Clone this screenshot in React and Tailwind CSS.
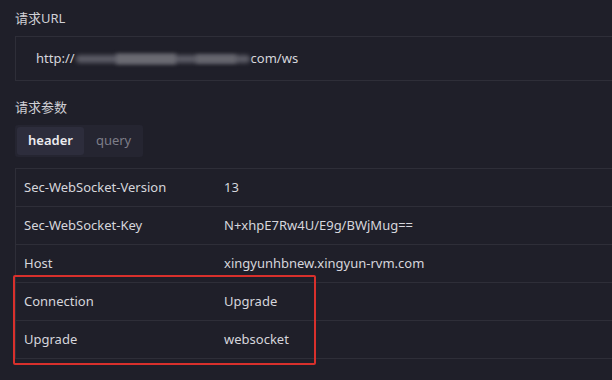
import React, { useState } from "react";

const rows = [
  { k: "Sec-WebSocket-Version", v: "13" },
  { k: "Sec-WebSocket-Key", v: "N+xhpE7Rw4U/E9g/BWjMug==" },
  { k: "Host", v: "xingyunhbnew.xingyun-rvm.com" },
  { k: "Connection", v: "Upgrade" },
  { k: "Upgrade", v: "websocket" },
];

export default function App() {
  const [tab, setTab] = useState("header");

  return (
    <div
      className="w-[612px] h-[380px] overflow-hidden bg-[#1f1f29] text-[13px] text-[#d6d6dc] pl-[15px]"
      style={{ fontFamily: '"Noto Sans", "Noto Sans CJK SC", sans-serif' }}
    >
      {/* 请求URL */}
      <div className="pt-[8px] h-[36px] leading-[20px] text-[#d0d0d6]">请求URL</div>
      <div className="h-[45px] border border-[#2e2e38] border-r-0 flex items-center pl-[20px]">
        <span>http://</span>
        <span className="relative w-[174px] h-[14px] mx-[1px]">
          <span className="absolute inset-x-0 top-[3px] h-[8px] bg-[#5a5a64] blur-[2px] rounded-sm" />
          <span className="absolute left-[40px] w-[60px] top-[2px] h-[10px] bg-[#6a6a72] blur-[2px]" />
          <span className="absolute left-[120px] w-[40px] top-[3px] h-[8px] bg-[#66666e] blur-[2px]" />
        </span>
        <span>com/ws</span>
      </div>

      {/* 请求参数 */}
      <div className="pt-[16px] h-[44px] leading-[20px] text-[#d0d0d6]">请求参数</div>
      <div className="inline-flex items-center gap-[2px] p-[2px] bg-[#252531] rounded-[3px]">
        {["header", "query"].map((t) => (
          <button
            key={t}
            onClick={() => setTab(t)}
            className={`h-[28px] rounded-[3px] text-[13px] ${
              tab === t
                ? "px-[11px] bg-[#2d2d3c] text-[#ececf0] font-semibold"
                : "px-[10px] text-[#7d7d88]"
            }`}
          >
            {t}
          </button>
        ))}
      </div>

      {/* table */}
      <div className="relative mt-[11px]">
        <div className="border-t border-l border-[#2e2e38]">
          {rows.map((r) => (
            <div key={r.k} className="h-[38px] flex items-center border-b border-[#2e2e38]">
              <div className="w-[208px] pl-[8px]">{r.k}</div>
              <div>{r.v}</div>
            </div>
          ))}
        </div>
        <div className="absolute left-[-2px] top-[107px] w-[303px] h-[90px] border-2 border-[#d8302c] rounded-[2px] pointer-events-none" />
      </div>
    </div>
  );
}
